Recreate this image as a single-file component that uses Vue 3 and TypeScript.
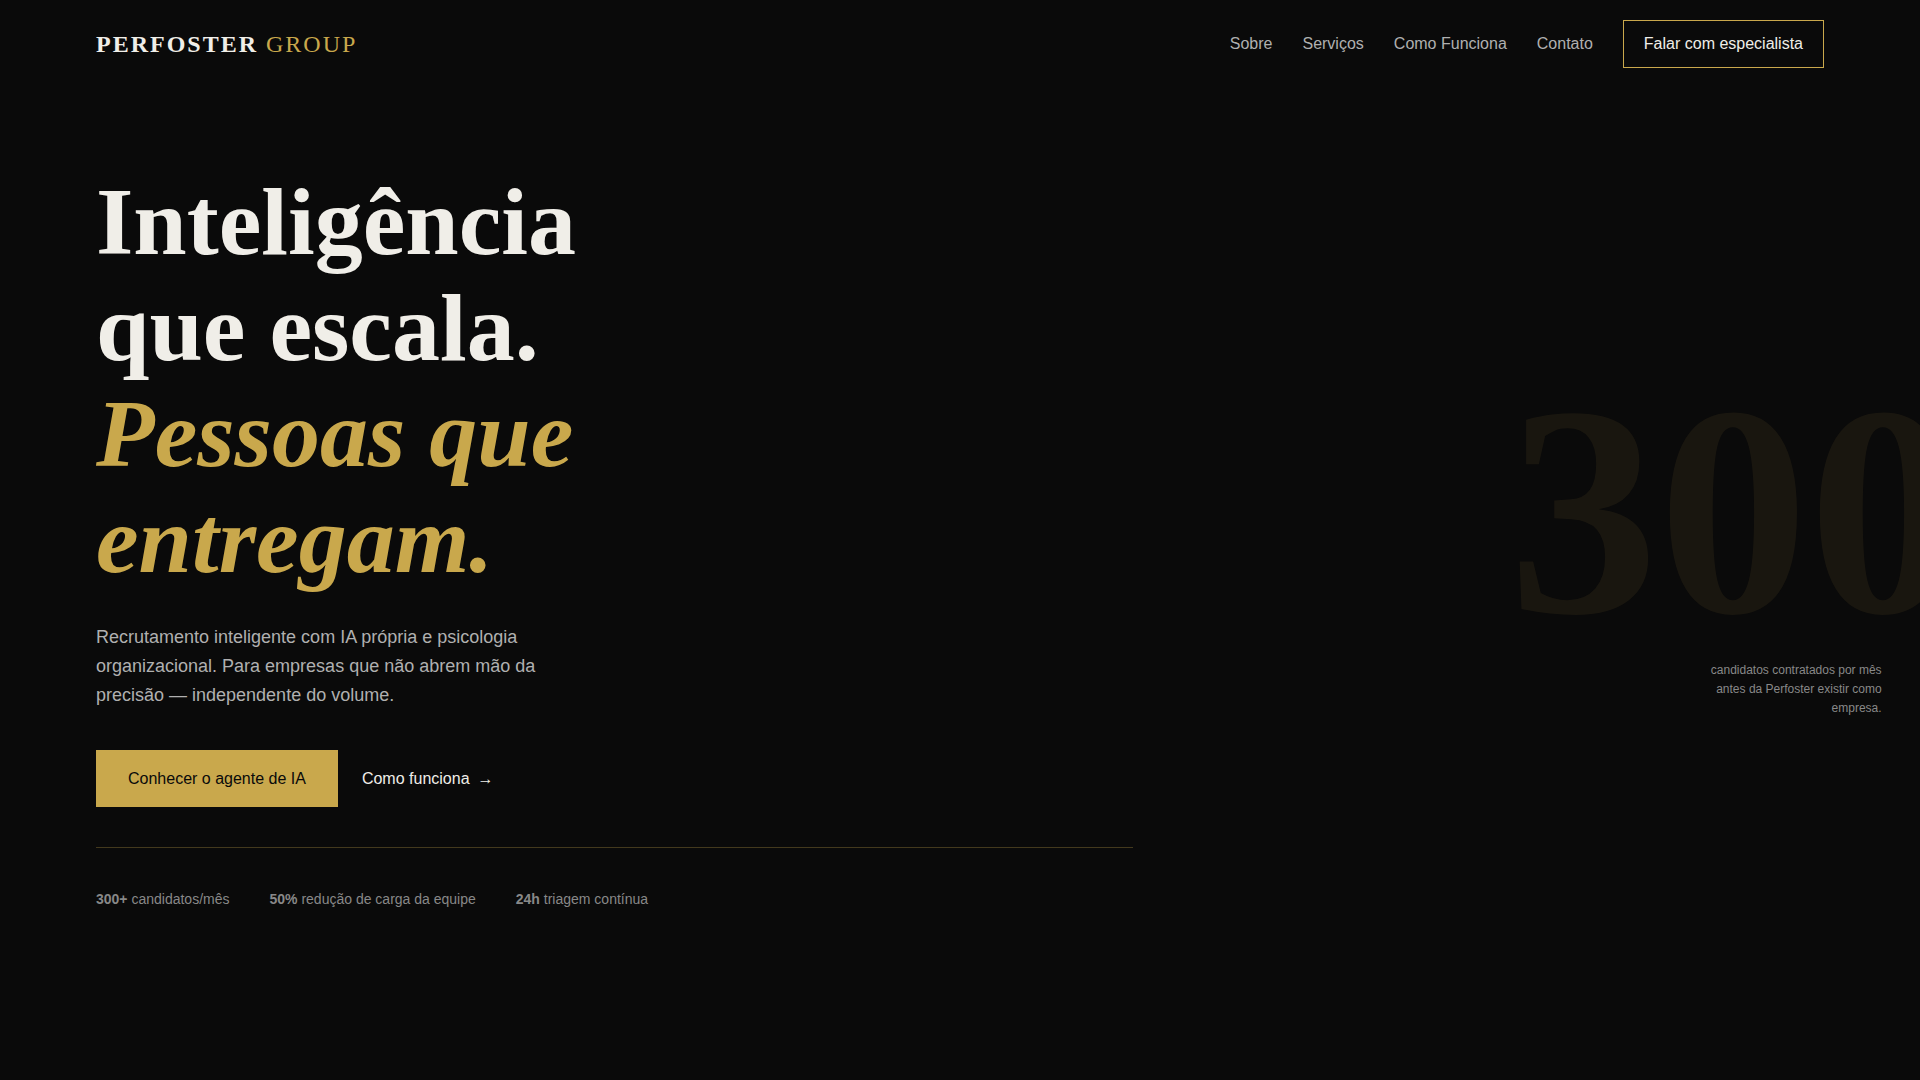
<script setup lang="ts">
interface NavLink {
  label: string
  href: string
}

interface Stat {
  value: string
  label: string
}

const links: NavLink[] = [
  { label: 'Sobre', href: '#sobre' },
  { label: 'Serviços', href: '#servicos' },
  { label: 'Como Funciona', href: '#como-funciona' },
  { label: 'Contato', href: '#contato' },
]

const stats: Stat[] = [
  { value: '300+', label: 'candidatos/mês' },
  { value: '50%', label: 'redução de carga da equipe' },
  { value: '24h', label: 'triagem contínua' },
]
</script>

<template>
  <div class="page">
    <header class="header">
      <a class="logo" href="#"><strong>PERFOSTER</strong> <span>GROUP</span></a>
      <nav class="nav">
        <a v-for="link in links" :key="link.href" class="nav-link" :href="link.href">{{ link.label }}</a>
        <button class="nav-cta" type="button">Falar com especialista</button>
      </nav>
    </header>

    <main class="hero">
      <section class="content">
        <h1 class="title">Inteligência que escala. <em>Pessoas que entregam.</em></h1>
        <p class="lead">
          Recrutamento inteligente com IA própria e psicologia organizacional. Para empresas que não
          abrem mão da precisão — independente do volume.
        </p>
        <div class="actions">
          <button class="primary" type="button">Conhecer o agente de IA</button>
          <a class="secondary" href="#como-funciona">Como funciona <span>→</span></a>
        </div>
        <ul class="stats">
          <li v-for="stat in stats" :key="stat.value">
            <strong>{{ stat.value }}</strong> {{ stat.label }}
          </li>
        </ul>
      </section>

      <aside class="figure">
        <div class="number">300</div>
        <p class="caption">candidatos contratados por mês antes da Perfoster existir como empresa.</p>
      </aside>
    </main>
  </div>
</template>

<style>
body {
  margin: 0;
  background: #0a0a0a;
}
</style>

<style scoped>
.page {
  display: flex;
  flex-direction: column;
  min-height: 100vh;
  overflow: hidden;
  box-sizing: border-box;
  background: #0a0a0a;
  color: #f0eee8;
  font-family: 'Liberation Sans', Arial, sans-serif;
  font-size: 16px;
  line-height: 26px;
}

a {
  color: inherit;
  text-decoration: none;
}

button {
  font: inherit;
  border-radius: 0;
  cursor: pointer;
}

.header {
  display: flex;
  align-items: center;
  justify-content: space-between;
  padding: 20px 5vw;
}

.logo {
  font-family: 'Liberation Serif', 'Times New Roman', serif;
  font-size: 24px;
  letter-spacing: 2px;
}

.logo span {
  color: #c9a84c;
}

.nav {
  display: flex;
  align-items: center;
  gap: 30px;
}

.nav-link {
  color: #b0b0b0;
}

.nav-cta {
  padding: 10px 20px;
  border: 1px solid #c9a84c;
  background: transparent;
  color: #f0eee8;
}

.hero {
  display: flex;
  flex: 1;
  align-items: center;
  justify-content: space-between;
  padding: 0 5vw 88px;
}

.content {
  flex: 0 0 60%;
}

.title {
  max-width: 600px;
  margin: 0 0 30px;
  font-family: 'Liberation Serif', 'Times New Roman', serif;
  font-size: 96px;
  font-weight: 700;
  line-height: 106px;
}

.title em {
  display: block;
  color: #c9a84c;
}

.lead {
  max-width: 480px;
  margin: 0 0 40px;
  color: #b0b0b0;
  font-size: 18px;
  line-height: 29px;
}

.actions {
  display: flex;
  align-items: center;
  gap: 24px;
  margin-bottom: 40px;
  line-height: 25px;
}

.primary {
  padding: 16px 32px;
  border: 0;
  background: #c9a84c;
  color: #0a0a0a;
}

.secondary {
  display: flex;
  gap: 8px;
}

.stats {
  display: flex;
  gap: 40px;
  margin: 0;
  padding: 40px 0 0;
  border-top: 1px solid rgba(201, 168, 76, 0.3);
  color: #888;
  font-size: 14px;
  line-height: 23px;
  list-style: none;
}

.figure {
  margin-right: -7vw;
  padding-bottom: 1px;
  text-align: right;
}

.number {
  color: rgba(201, 168, 76, 0.08);
  font-family: 'Liberation Serif', 'Times New Roman', serif;
  font-size: 300px;
  font-weight: 700;
  line-height: 300px;
}

.caption {
  max-width: 180px;
  margin: 0 4vw 0 auto;
  color: #888;
  font-size: 12px;
  line-height: 19px;
}
</style>
